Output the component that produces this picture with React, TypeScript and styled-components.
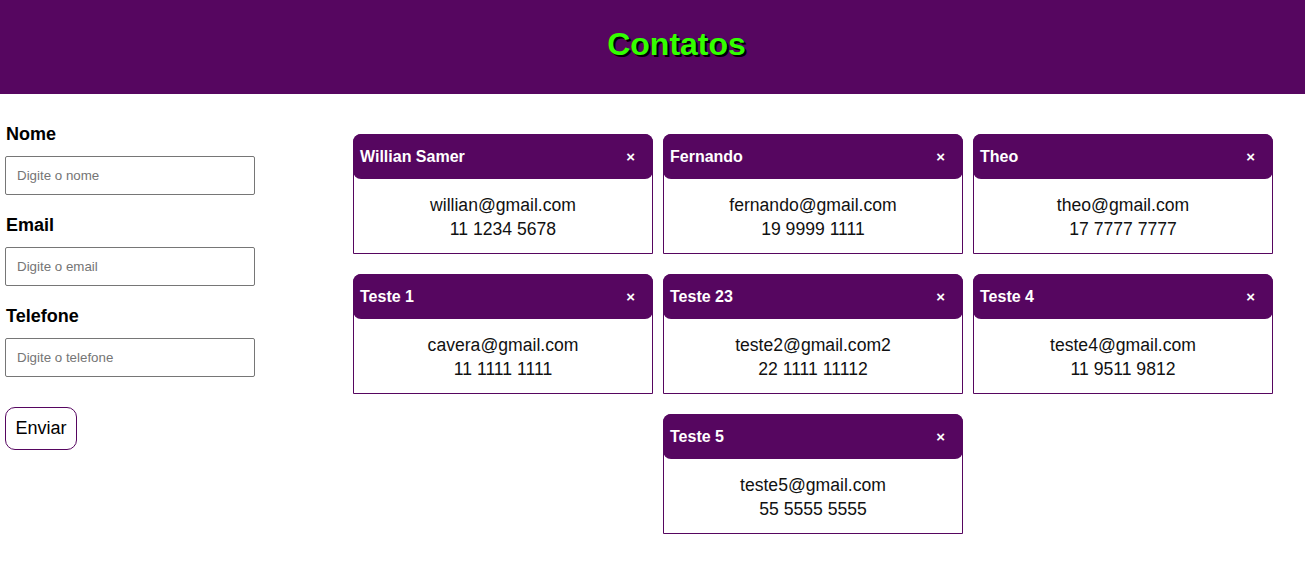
import React from "react";
import styled, { createGlobalStyle } from "styled-components";

const purple = "#560660";

const Global = createGlobalStyle`
  * { box-sizing: border-box; }
  body { margin: 0; font-family: "Liberation Sans", Arial, sans-serif; background: #fff; color: #000; }
`;

const Header = styled.header`
  height: 94px;
  background: ${purple};
  display: flex;
  align-items: center;
  justify-content: center;
  padding-bottom: 6px;
`;

const Title = styled.h1`
  margin: 0;
  padding-left: 48px;
  font-size: 32px;
  font-weight: 700;
  color: #33ff00;
  text-shadow: 2px 2px 0 #000;
`;

const Main = styled.main`
  display: flex;
  align-items: flex-start;
`;

const Form = styled.form`
  width: 353px;
  padding: 29px 0 0 5px;
  display: flex;
  flex-direction: column;
`;

const Label = styled.label`
  font-size: 18px;
  font-weight: 700;
  line-height: 22px;
  padding-left: 1px;
  margin-bottom: 11px;
`;

const Input = styled.input`
  width: 250px;
  height: 39px;
  border: 1px solid #767676;
  border-radius: 2px;
  padding: 0 11px;
  font-family: "Liberation Sans", Arial, sans-serif;
  font-size: 13.333px;
  margin-bottom: 19px;
  &::placeholder { color: #757575; }
`;

const Button = styled.button`
  align-self: flex-start;
  margin-top: 11px;
  width: 72px;
  height: 43px;
  border: 1px solid ${purple};
  border-radius: 10px;
  background: #fff;
  font-family: "Liberation Sans", Arial, sans-serif;
  font-size: 18px;
  color: #000;
  padding: 0;
`;

const Cards = styled.section`
  width: 920px;
  display: flex;
  flex-wrap: wrap;
  justify-content: center;
  gap: 20px 10px;
  padding-top: 40px;
`;

const Card = styled.article`
  width: 300px;
  height: 120px;
  border: 1px solid ${purple};
  border-radius: 8px 8px 0 0;
  display: flex;
  flex-direction: column;
`;

const CardHead = styled.div`
  margin: -1px -1px 0;
  height: 45px;
  background: ${purple};
  border-radius: 8px;
  display: flex;
  align-items: center;
  justify-content: space-between;
  padding: 0 18px 0 7px;
  color: #fff;
`;

const Name = styled.span`
  font-size: 16px;
  font-weight: 700;
`;

const Close = styled.span`
  font-size: 15px;
  font-weight: 700;
`;

const CardBody = styled.div`
  flex: 1;
  display: flex;
  flex-direction: column;
  align-items: center;
  padding-top: 14px;
  font-size: 17.6px;
  line-height: 24px;
  color: #111;
`;

const contacts = [
  { name: "Willian Samer", email: "willian@gmail.com", phone: "11 1234 5678" },
  { name: "Fernando", email: "fernando@gmail.com", phone: "19 9999 1111" },
  { name: "Theo", email: "theo@gmail.com", phone: "17 7777 7777" },
  { name: "Teste 1", email: "cavera@gmail.com", phone: "11 1111 1111" },
  { name: "Teste 23", email: "teste2@gmail.com2", phone: "22 1111 11112" },
  { name: "Teste 4", email: "teste4@gmail.com", phone: "11 9511 9812" },
  { name: "Teste 5", email: "teste5@gmail.com", phone: "55 5555 5555" },
];

export default function App() {
  return (
    <>
      <Global />
      <Header>
        <Title>Contatos</Title>
      </Header>
      <Main>
        <Form onSubmit={(e) => e.preventDefault()}>
          <Label>Nome</Label>
          <Input placeholder="Digite o nome" />
          <Label>Email</Label>
          <Input placeholder="Digite o email" />
          <Label>Telefone</Label>
          <Input placeholder="Digite o telefone" />
          <Button type="submit">Enviar</Button>
        </Form>
        <Cards>
          {contacts.map((c) => (
            <Card key={c.name}>
              <CardHead>
                <Name>{c.name}</Name>
                <Close>×</Close>
              </CardHead>
              <CardBody>
                <span>{c.email}</span>
                <span>{c.phone}</span>
              </CardBody>
            </Card>
          ))}
        </Cards>
      </Main>
    </>
  );
}
